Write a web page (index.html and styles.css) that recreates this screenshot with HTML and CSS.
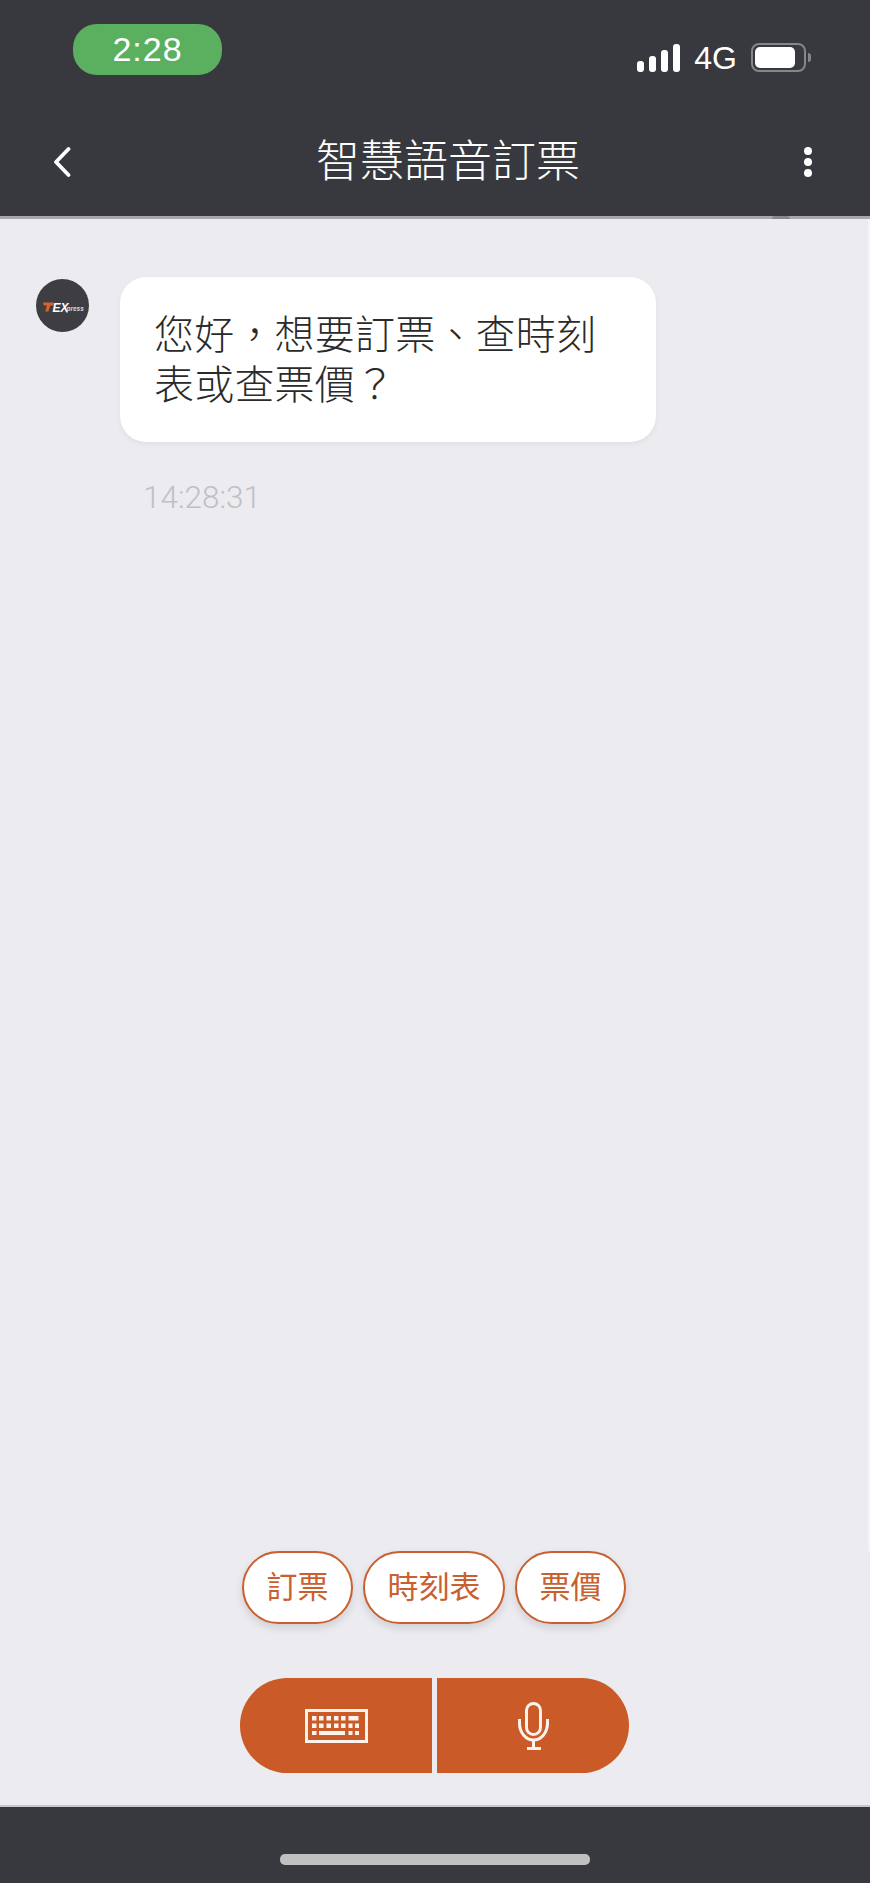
FILE: index.html
```html
<!DOCTYPE html>
<html lang="zh-Hant">
<head>
    <meta charset="UTF-8">
    <meta name="viewport" content="width=device-width, initial-scale=1.0">
    <title>智慧語音訂票</title>
    <link rel="stylesheet" href="styles.css">
</head>
<body>
    <div class="app">
        <!-- Status bar and title -->
        <header class="top">
            <div class="status">
                <div class="clock">2:28</div>
                <div class="status-right">
                    <div class="signal">
                        <span class="bar bar-1"></span>
                        <span class="bar bar-2"></span>
                        <span class="bar bar-3"></span>
                        <span class="bar bar-4"></span>
                    </div>
                    <span class="network">4G</span>
                    <div class="battery"><span class="battery-level"></span></div>
                    <span class="battery-nub"></span>
                </div>
            </div>
            <div class="nav">
                <svg class="back" width="18" height="30" viewBox="0 0 18 30">
                    <path d="M15.5 2 L3 15 L15.5 28" fill="none" stroke="#fff" stroke-width="3.8" stroke-linecap="round" stroke-linejoin="round"/>
                </svg>
                <h1>智慧語音訂票</h1>
                <div class="more">
                    <span></span>
                    <span></span>
                    <span></span>
                </div>
            </div>
            <span class="top-notch"></span>
        </header>

        <!-- Chat messages -->
        <main class="chat">
            <div class="message">
                <svg class="avatar" width="53" height="53" viewBox="0 0 53 53">
                    <circle cx="26.5" cy="26.5" r="26.5" fill="#3d3d42"/>
                    <path d="M7 23.5 H18 L17.2 26.5 H14.2 L12.4 32.5 H9.2 L11 26.5 H7.8 Z" fill="#d9622b"/>
                    <text x="16.5" y="32.5" class="logo-ex">EX</text>
                    <text x="30.5" y="32" class="logo-press">press</text>
                </svg>
                <div class="message-body">
                    <div class="bubble">您好，想要訂票、查時刻表或查票價？</div>
                    <div class="time">14:28:31</div>
                </div>
            </div>
        </main>

        <!-- Quick replies and input buttons -->
        <section class="actions">
            <div class="chips">
                <button class="chip">訂票</button>
                <button class="chip">時刻表</button>
                <button class="chip">票價</button>
            </div>
            <div class="input-btns">
                <button class="input-btn input-btn-left">
                    <svg width="63" height="34" viewBox="0 0 63 34">
                        <rect x="1.5" y="1.5" width="60" height="31" fill="none" stroke="#fdf3ec" stroke-width="3"/>
                        <g fill="#fdf3ec">
                            <rect x="7" y="7" width="4.5" height="4.5"/>
                            <rect x="14" y="7" width="4.5" height="4.5"/>
                            <rect x="21.5" y="7" width="4.5" height="4.5"/>
                            <rect x="29" y="7" width="4.5" height="4.5"/>
                            <rect x="36" y="7" width="4.5" height="4.5"/>
                            <rect x="43.5" y="7" width="10" height="4.5"/>
                            <rect x="7" y="14.5" width="4.5" height="4.5"/>
                            <rect x="14" y="14.5" width="4.5" height="4.5"/>
                            <rect x="21.5" y="14.5" width="4.5" height="4.5"/>
                            <rect x="29" y="14.5" width="4.5" height="4.5"/>
                            <rect x="36" y="14.5" width="4.5" height="4.5"/>
                            <rect x="43.5" y="14.5" width="4" height="4.5"/>
                            <rect x="50" y="14.5" width="4" height="4.5"/>
                            <rect x="7" y="22" width="4.5" height="4"/>
                            <rect x="14" y="22" width="26" height="4"/>
                            <rect x="43.5" y="22" width="4" height="4"/>
                            <rect x="50" y="22" width="4" height="4"/>
                        </g>
                    </svg>
                </button>
                <button class="input-btn input-btn-right">
                    <svg width="31" height="48" viewBox="0 0 31 48">
                        <rect x="8.5" y="1.5" width="14" height="31" rx="7" fill="none" stroke="#fdf3ec" stroke-width="3"/>
                        <path d="M1.5 17 V21 C1.5 31 8 38 15.5 38 C23 38 29.5 31 29.5 21 V17 M15.5 38 V46 M9 46.5 H23" fill="none" stroke="#fdf3ec" stroke-width="3"/>
                    </svg>
                </button>
            </div>
        </section>

        <footer class="bottom">
            <div class="home-bar"></div>
        </footer>
    </div>
</body>
</html>
```

FILE: styles.css
```css
* {
    box-sizing: border-box;
}
body {
    margin: 0;
    background-color: #ebebf0;
    font-family: "Liberation Sans", "Noto Sans CJK TC", sans-serif;
    color: #333;
}
.app {
    height: 1883px;
    display: flex;
    flex-direction: column;
    overflow: hidden;
}
.top {
    position: relative;
    height: 219px;
    background-color: #38393e;
    border-bottom: 3px solid #a8a8ac;
    flex-shrink: 0;
}
.top-notch {
    position: absolute;
    right: 80px;
    bottom: -3px;
    width: 18px;
    height: 3px;
    background-color: #88888c;
    border-radius: 3px 3px 0 0;
}
.status {
    height: 127px;
    padding: 24px 59px 0 73px;
    display: flex;
    justify-content: space-between;
    align-items: flex-start;
}
.clock {
    width: 149px;
    height: 51px;
    border-radius: 24px;
    background-color: #5bb060;
    color: #fff;
    font-size: 34px;
    line-height: 51px;
    text-align: center;
    letter-spacing: 1px;
}
.status-right {
    display: flex;
    align-items: flex-end;
    height: 48px;
}
.signal {
    display: flex;
    align-items: flex-end;
    gap: 5px;
}
.bar {
    width: 7px;
    background-color: #fff;
    border-radius: 3px;
}
.bar-1 { height: 11px; }
.bar-2 { height: 16px; }
.bar-3 { height: 22px; }
.bar-4 { height: 28px; }
.network {
    margin-left: 14px;
    color: #fff;
    font-size: 32px;
    line-height: 28px;
    height: 28px;
}
.battery {
    width: 55px;
    height: 29px;
    margin-left: 14px;
    padding: 2px;
    border: 2px solid #85858a;
    border-radius: 8px;
}
.battery-level {
    display: block;
    width: 40px;
    height: 21px;
    background-color: #fff;
    border-radius: 5px;
}
.battery-nub {
    width: 3px;
    height: 9px;
    margin: 0 0 10px 2px;
    background-color: #85858a;
    border-radius: 0 3px 3px 0;
}
.nav {
    height: 89px;
    padding: 0 58px 20px 53px;
    display: flex;
    justify-content: space-between;
    align-items: center;
}
.nav h1 {
    margin: 0 0 0 21px;
    color: #fff;
    font-size: 44px;
    font-weight: 300;
    line-height: 60px;
}
.back {
    display: block;
}
.more {
    display: flex;
    flex-direction: column;
    gap: 3px;
}
.more span {
    width: 8px;
    height: 8px;
    border-radius: 50%;
    background-color: #fff;
}
.chat {
    flex: 1;
    padding: 58px 0 0 36px;
    border-right: 2px solid #f4f4f6;
}
.message {
    display: flex;
    gap: 31px;
    align-items: flex-start;
}
.avatar {
    display: block;
    margin-top: 2px;
}
.logo-ex {
    font-family: "Liberation Sans", sans-serif;
    font-size: 12px;
    font-weight: bold;
    font-style: italic;
    fill: #fff;
}
.logo-press {
    font-family: "Liberation Sans", sans-serif;
    font-size: 6.5px;
    font-weight: bold;
    font-style: italic;
    fill: #d8d8d8;
}
.bubble {
    width: 536px;
    height: 165px;
    padding: 33px 34px 0;
    background-color: #fff;
    border-radius: 26px;
    box-shadow: 0 2px 5px rgba(0, 0, 0, 0.06);
    color: #2a2a2a;
    font-size: 40px;
    font-weight: 300;
    line-height: 50px;
    letter-spacing: 0.2px;
}
.time {
    margin: 39px 0 0 23px;
    color: #c0c0c4;
    font-family: Roboto, "Liberation Sans", sans-serif;
    font-size: 31.5px;
    font-weight: 300;
    line-height: 34px;
}
.actions {
    display: flex;
    flex-direction: column;
    align-items: center;
    padding-bottom: 32px;
}
.chips {
    display: flex;
    gap: 10px;
    margin: 0 2px 54px 0;
}
.chip {
    height: 73px;
    padding: 0 22.5px 7px;
    background-color: #fff;
    border: 2px solid #c9602f;
    border-radius: 37px;
    box-shadow: 0 4px 8px rgba(0, 0, 0, 0.12);
    color: #c9602f;
    font-family: inherit;
    font-size: 31px;
    font-weight: 400;
}
.input-btns {
    display: flex;
    gap: 5px;
    margin-left: -1px;
}
.input-btn {
    width: 192px;
    height: 95px;
    padding: 0;
    border: none;
    background-color: #ca5a27;
    display: flex;
    align-items: center;
    justify-content: center;
}
.input-btn-left {
    border-radius: 48px 0 0 48px;
}
.input-btn-right {
    border-radius: 0 48px 48px 0;
}
.bottom {
    height: 78px;
    flex-shrink: 0;
    background-color: #38393e;
    border-top: 2px solid #c8c8cc;
    display: flex;
    justify-content: center;
    padding-top: 47px;
}
.home-bar {
    width: 310px;
    height: 11px;
    border-radius: 5px;
    background-color: #c0c0c0;
}
```
